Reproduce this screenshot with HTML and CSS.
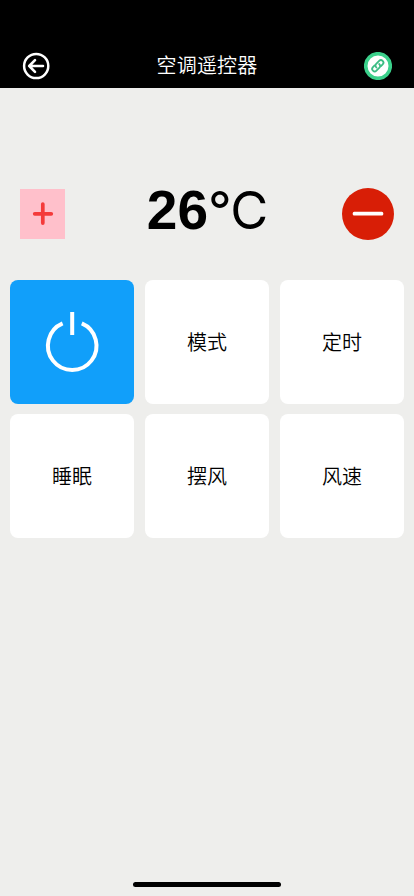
FILE: index.html
```html
<!DOCTYPE html>
<html lang="zh-CN">
<head>
<meta charset="utf-8">
<meta name="viewport" content="width=device-width, initial-scale=1">
<title>空调遥控器</title>
<link rel="stylesheet" href="styles.css">
</head>
<body>
<header class="bar">
  <svg class="icon" viewBox="0 0 28 28" fill="none" stroke="#fff" stroke-linecap="round" stroke-linejoin="round">
    <circle cx="14.2" cy="14" r="12.1" stroke-width="2.5"/>
    <path d="M21 14H7.2M13 8.2L7.2 14l5.8 5.8" stroke-width="2.6"/>
  </svg>
  <h1 class="title">空调遥控器</h1>
  <svg class="icon" viewBox="0 0 28 28" fill="none">
    <circle cx="14" cy="14" r="12.3" fill="#fff" stroke="#3bd08b" stroke-width="3.6"/>
    <g transform="translate(13.8 13.8) rotate(-45)" stroke="#3bbd84" stroke-width="1.8" stroke-linecap="round">
      <path d="M-2 -2.5H-4.4a2.5 2.5 0 0 0 0 5H-.2a2.5 2.5 0 0 0 2.4 -2.8"/>
      <path d="M2 2.5H4.4a2.5 2.5 0 0 0 0 -5H.2a2.5 2.5 0 0 0 -2.4 2.8"/>
    </g>
  </svg>
</header>
<main>
  <section class="temp">
    <button class="plus" aria-label="+"><svg viewBox="0 0 46 50" stroke="#f43a3a" stroke-width="3.7" stroke-linecap="round"><path d="M14.7 24.8H31.3M22.8 15.1V34.1"/></svg></button>
    <div class="reading"><b>26</b><span>°C</span></div>
    <button class="minus" aria-label="-"><svg viewBox="0 0 52 52"><circle cx="26" cy="26" r="26" fill="#d81e06"/><rect x="10.7" y="23.8" width="30.6" height="3.8" rx="1.5" fill="#fff"/></svg></button>
  </section>
  <section class="grid">
    <button class="key power" aria-label="power"><svg viewBox="0 0 60 64" fill="none" stroke="#fff" stroke-width="4"><path d="M20.6 14.4A24.3 24.3 0 1 0 39.8 14.4M30.2 3V26"/></svg></button>
    <button class="key">模式</button>
    <button class="key">定时</button>
    <button class="key">睡眠</button>
    <button class="key">摆风</button>
    <button class="key">风速</button>
  </section>
</main>
<div class="home"></div>
</body>
</html>
```
FILE: styles.css
```css
* { box-sizing: border-box; }
body {
  margin: 0;
  height: 896px;
  display: flex;
  flex-direction: column;
  background: #eeeeec;
  color: #000;
  font-family: "Liberation Sans", "Noto Sans CJK SC", sans-serif;
}
button { border: 0; padding: 0; background: none; font: inherit; color: inherit; }
svg { display: block; }
.bar {
  height: 88px;
  padding: 44px 22px 0;
  display: flex;
  align-items: center;
  justify-content: space-between;
  background: #000;
  color: #fff;
}
.icon { width: 28px; height: 28px; }
.title { margin: 0; font-size: 20px; line-height: 28px; font-weight: 350; letter-spacing: .2px; }
main { flex: 1; }
.temp {
  height: 52px;
  margin: 100px 20px 0;
  display: flex;
  align-items: center;
  justify-content: space-between;
}
.plus { width: 46px; height: 50px; border-right: .5px solid #eeeeec; background: #ffc0cb; }
.plus svg { width: 46px; height: 50px; }
.reading {
  display: flex;
  align-items: baseline;
  padding: 0 0 7px 6px;
  font-family: Inter, "Liberation Sans", sans-serif;
  font-size: 52px;
  line-height: 52px;
}
.reading b { font-family: "Liberation Sans", sans-serif; font-size: 55px; }
.reading span { letter-spacing: -1px; }
.minus svg { width: 52px; height: 52px; }
.grid {
  margin: 40px 10px 0;
  display: grid;
  grid-template-columns: repeat(3, 124px);
  grid-auto-rows: 124px;
  gap: 10px 11px;
}
.key {
  display: flex;
  align-items: center;
  justify-content: center;
  padding-top: 2px;
  border-radius: 8px;
  background: #fff;
  font-size: 20px;
  font-weight: 350;
  line-height: 28px;
}
.power { padding: 0 0 3px; background: #119ffa; }
.power svg { width: 60px; height: 64px; }
.home { width: 148px; height: 5px; margin: 0 auto 9px; border-radius: 3px; background: #000; }
```
